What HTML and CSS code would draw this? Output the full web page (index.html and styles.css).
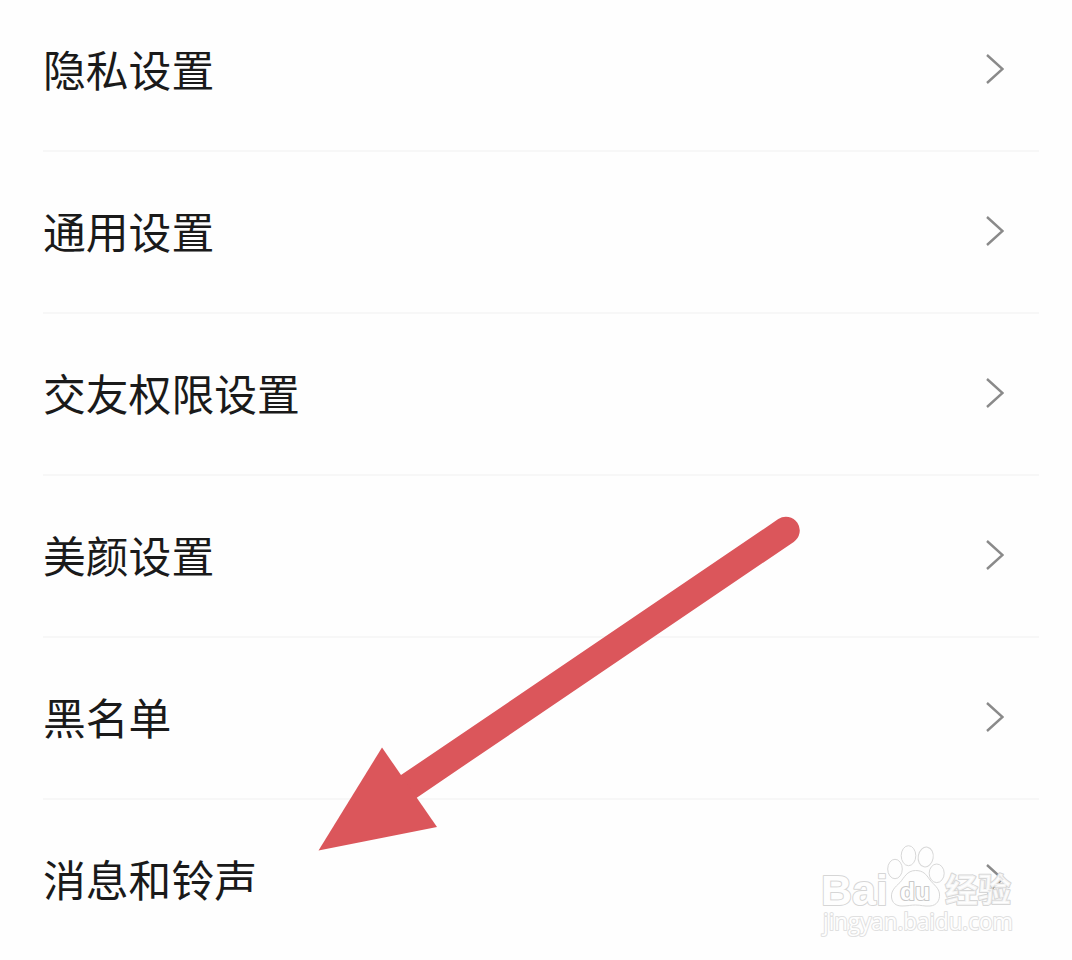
FILE: index.html
```
<!DOCTYPE html>
<html lang="zh-CN">
<head>
    <meta charset="UTF-8">
    <meta name="viewport" content="width=device-width, initial-scale=1.0">
    <title>设置</title>
    <link rel="stylesheet" href="styles.css">
</head>
<body>
    <!-- Settings list -->
    <ul class="settings">
        <li class="row">
            <span class="label">隐私设置</span>
            <svg class="chevron" viewBox="0 0 20 32"><path d="M3 2 18.500 16 3 30"/></svg>
        </li>
        <li class="row">
            <span class="label">通用设置</span>
            <svg class="chevron" viewBox="0 0 20 32"><path d="M3 2 18.500 16 3 30"/></svg>
        </li>
        <li class="row">
            <span class="label">交友权限设置</span>
            <svg class="chevron" viewBox="0 0 20 32"><path d="M3 2 18.500 16 3 30"/></svg>
        </li>
        <li class="row">
            <span class="label">美颜设置</span>
            <svg class="chevron" viewBox="0 0 20 32"><path d="M3 2 18.500 16 3 30"/></svg>
        </li>
        <li class="row">
            <span class="label">黑名单</span>
            <svg class="chevron" viewBox="0 0 20 32"><path d="M3 2 18.500 16 3 30"/></svg>
        </li>
        <li class="row">
            <span class="label">消息和铃声</span>
            <svg class="chevron" viewBox="0 0 20 32"><path d="M3 2 18.500 16 3 30"/></svg>
        </li>
    </ul>

    <!-- Arrow pointing at the last row -->
    <svg class="arrow" viewBox="310 510 500 350">
        <path class="arrow-shaft" d="M786 530.5 405 789"/>
        <path class="arrow-head" d="M318.5 850.5 382 747.5 437 827Z"/>
    </svg>

    <!-- Watermark -->
    <svg class="watermark" viewBox="810 835 220 115">
        <g class="paw">
            <ellipse cx="895" cy="869" rx="7.3" ry="9.7"/>
            <ellipse cx="908.5" cy="855.7" rx="7.3" ry="10"/>
            <ellipse cx="925.7" cy="857" rx="7.5" ry="10" transform="rotate(10 925.7 857)"/>
            <ellipse cx="936.7" cy="873.3" rx="7.5" ry="9.3"/>
            <path d="M915.5 870.5C907 870.5 904 878 900 882.5C895 887 891 891 891.5 897C892 903 896 906 902 906C908 906 911 905 915.5 905C921 905 924 906.5 930 906C937 905.5 940 900 939.5 894C939 888 934 885 930 880C926 874 923 870.5 915.5 870.5Z"/>
        </g>
        <text class="brand" x="821" y="904.5" textLength="67" lengthAdjust="spacingAndGlyphs">Bai</text>
        <text class="du" x="900" y="900" textLength="30" lengthAdjust="spacingAndGlyphs">du</text>
        <text class="jingyan" x="945" y="902" textLength="66">经验</text>
        <text class="url" x="823" y="930" textLength="190" lengthAdjust="spacingAndGlyphs">jingyan.baidu.com</text>
    </svg>
</body>
</html>
```

FILE: styles.css
```
* {
    margin: 0;
    padding: 0;
    box-sizing: border-box;
}

body {
    height: 960px;
    background: #fefefe;
    color: #1a1a1a;
    font-family: "Noto Sans CJK SC", sans-serif;
    overflow: hidden;
    position: relative;
}

.settings {
    list-style: none;
    margin-top: -10px;
    padding: 0 33px 0 43px;
}

.row {
    display: flex;
    justify-content: space-between;
    align-items: center;
    height: 162px;
    padding-right: 35px;
    border-bottom: 2px solid #f7f7f7;
}

.row:last-child {
    border-bottom-color: transparent;
}

.label {
    font-size: 42.8px;
    line-height: 60px;
    padding-bottom: 5px;
}

.chevron {
    width: 20px;
    height: 32px;
    margin-bottom: 3px;
    fill: none;
    stroke: #8a8a8a;
    stroke-width: 2.4;
}

/* Arrow */
.arrow {
    position: absolute;
    left: 310px;
    top: 510px;
    width: 500px;
    height: 350px;
}

.arrow-shaft {
    stroke: #db565b;
    stroke-width: 27.5;
    stroke-linecap: round;
}

.arrow-head {
    fill: #db565b;
}

/* Watermark */
.watermark {
    position: absolute;
    left: 810px;
    top: 835px;
    width: 220px;
    height: 115px;
}

.watermark text {
    fill: #fefefe;
    stroke: #d6d6d6;
    stroke-width: 2;
    stroke-linejoin: round;
    paint-order: stroke;
}

.paw {
    fill: #fefefe;
    stroke: #d8d8d8;
    stroke-width: 1;
}

.watermark .brand {
    font: bold 43px "Liberation Sans", sans-serif;
}

.watermark .du {
    font: bold 24px "Liberation Sans", sans-serif;
    stroke: #c8c8c8;
}

.watermark .jingyan {
    font: bold 33px "Noto Sans CJK SC", sans-serif;
    fill-opacity: 0.8;
}

.watermark .url {
    font: 23px "Open Sans", sans-serif;
    stroke: #e0e0e0;
}
```
